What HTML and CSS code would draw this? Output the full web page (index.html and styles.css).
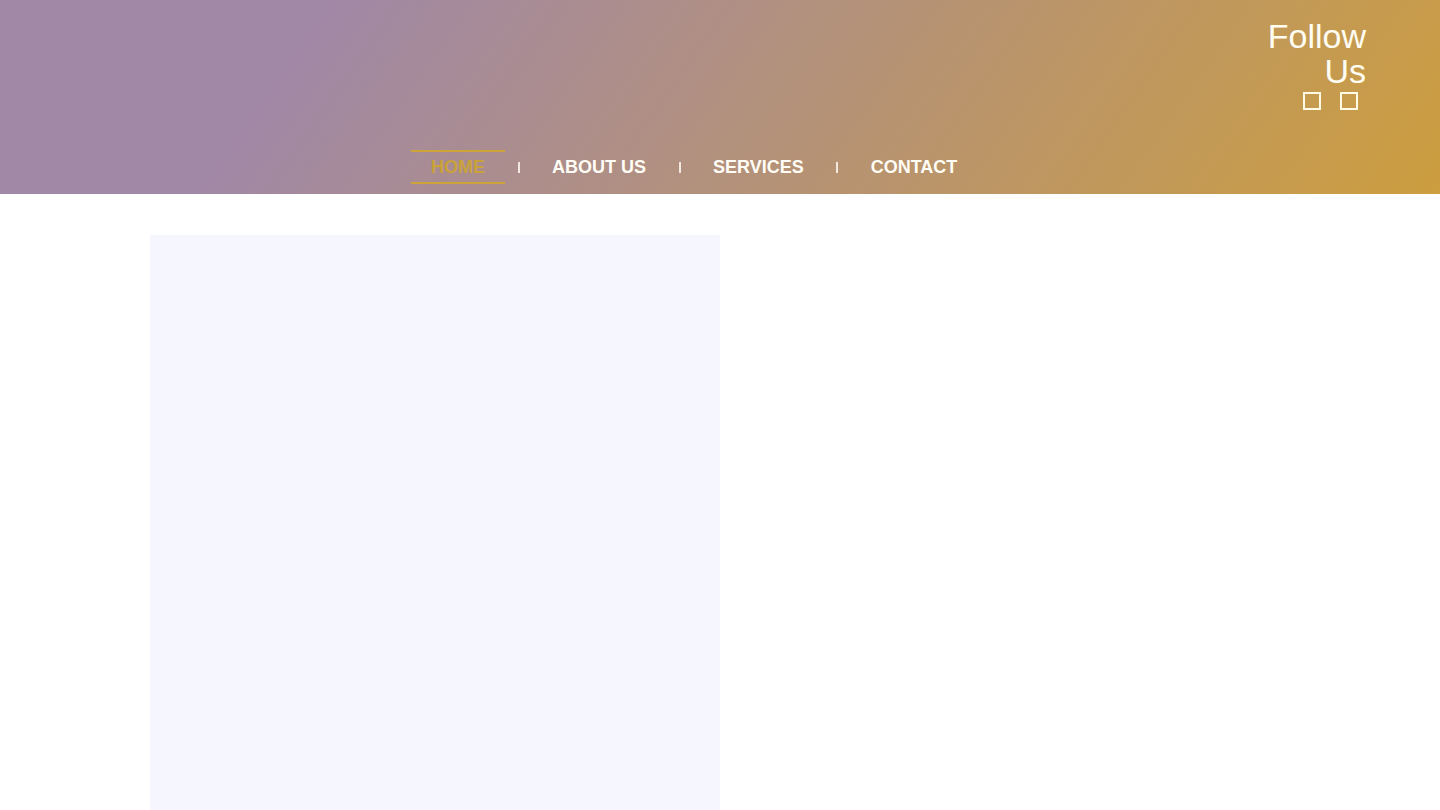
FILE: index.html
```html
<!DOCTYPE html>
<html lang="en">
<head>
<meta charset="utf-8">
<title>Home</title>
<link rel="stylesheet" href="styles.css">
</head>
<body>
<header class="site-header">
  <div class="top-row">
    <div class="follow">
      <h2 class="follow-title">Follow<br>Us</h2>
      <div class="social">
        <a class="social-icon" href="#" aria-label="Social link 1"></a>
        <a class="social-icon" href="#" aria-label="Social link 2"></a>
      </div>
    </div>
  </div>
  <nav class="main-nav">
    <a class="nav-item active" href="#">HOME</a>
    <span class="nav-sep"></span>
    <a class="nav-item" href="#">ABOUT US</a>
    <span class="nav-sep"></span>
    <a class="nav-item" href="#">SERVICES</a>
    <span class="nav-sep"></span>
    <a class="nav-item" href="#">CONTACT</a>
  </nav>
</header>
<main class="content">
  <section class="panel"></section>
</main>
</body>
</html>
```
FILE: styles.css
```css
* { box-sizing: border-box; }

html, body {
  margin: 0;
  padding: 0;
  background: #ffffff;
  font-family: "Liberation Sans", Arial, Helvetica, sans-serif;
  overflow: hidden;
}

.site-header {
  height: 194px;
  background: linear-gradient(125deg, #a188a6 21%, #cc9e3f 100%);
  padding-top: 19px;
  display: flex;
  flex-direction: column;
}

.top-row {
  display: flex;
  justify-content: flex-end;
  padding-right: 74px;
}

.follow {
  display: flex;
  flex-direction: column;
  align-items: flex-end;
}

.follow-title {
  margin: 0;
  font-weight: 400;
  font-size: 34px;
  line-height: 35px;
  color: #fffdf2;
  text-align: right;
}

.social {
  display: flex;
  gap: 19px;
  margin-top: 3px;
  padding-right: 8px;
}

.social-icon {
  display: block;
  width: 18px;
  height: 18px;
  border: 2px solid #fffbe6;
}

.main-nav {
  display: flex;
  align-items: center;
  margin-top: 40px;
  padding-left: 411px;
}

.nav-item {
  display: block;
  padding: 0 20px;
  font-size: 18px;
  font-weight: 700;
  line-height: 30px;
  color: #fffdf5;
  text-decoration: none;
  border-top: 2px solid transparent;
  border-bottom: 2px solid transparent;
}

.nav-item.active {
  color: #caa23a;
  border-top-color: #cda43a;
  border-bottom-color: #cda43a;
}

.nav-sep {
  display: block;
  width: 2px;
  height: 11px;
  margin: 0 12.5px;
  background: rgba(255, 248, 240, 0.85);
}

.content {
  padding: 41px 0 0 150px;
}

.panel {
  width: 570px;
  height: 620px;
  background: #f5f6fe;
}
```
